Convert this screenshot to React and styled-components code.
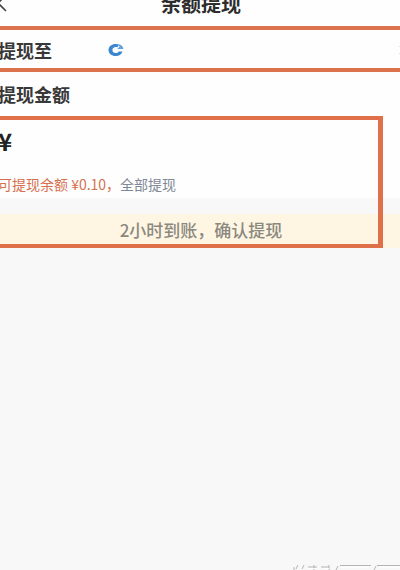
import React from "react";
import styled, { createGlobalStyle } from "styled-components";

const GlobalStyle = createGlobalStyle`
  * {
    box-sizing: border-box;
  }
  body {
    margin: 0;
    background: #f8f8f8;
    font-family: "Noto Sans CJK SC", "Liberation Sans", sans-serif;
    color: #333;
  }
`;

const Page = styled.div`
  display: flex;
  flex-direction: column;
  min-height: 100vh;
  overflow: hidden;
`;

const Header = styled.header`
  display: flex;
  align-items: flex-end;
  height: 26px;
  padding: 0 32px 8px 0;
  background: #fefefe;
`;

const BackButton = styled.button`
  display: flex;
  width: 40px;
  margin: 0 0 6px -6px;
  padding: 0;
  border: 0;
  background: none;
`;

const Title = styled.h1`
  flex: 1;
  margin: 0;
  font-size: 20px;
  line-height: 28px;
  font-weight: 700;
  text-align: center;
  color: #2d2d2d;
`;

const AccountRow = styled.div`
  display: flex;
  align-items: center;
  height: 46px;
  margin-right: -8px;
  padding-top: 2px;
  border: solid #dc734e;
  border-width: 4px 0;
  background: #fefefe;
`;

const Label = styled.div`
  width: 110px;
  margin-left: -2px;
  font-size: 18px;
  line-height: 24px;
  font-weight: 700;
  color: #383838;
`;

const Account = styled.button`
  display: flex;
  flex: 1;
  align-items: center;
  justify-content: space-between;
  padding: 0;
  border: 0;
  background: none;
`;

const AmountHeading = styled.div`
  display: flex;
  align-items: center;
  height: 44px;
  background: #fefefe;
`;

const Form = styled.form`
  position: relative;
`;

const Amount = styled.div`
  padding: 8px 0 2px;
  background: #fefefe;
`;

const Field = styled.label`
  display: flex;
  align-items: center;
  height: 32px;
  margin-left: -2px;
  font-size: 24px;
  font-weight: 700;
  color: #222;
`;

const AmountInput = styled.input`
  flex: 1;
  min-width: 0;
  border: 0;
  outline: 0;
  background: none;
  font: inherit;
`;

const Balance = styled.div`
  display: flex;
  align-items: center;
  height: 24px;
  margin: 16px 0 0 -2px;
  font-size: 14px;
  white-space: pre;
  color: #d5704e;
`;

const AllButton = styled.button`
  padding: 0;
  border: 0;
  background: none;
  font: inherit;
  color: #808895;
`;

const Submit = styled.button`
  display: block;
  width: 100%;
  height: 34px;
  margin-top: 16px;
  padding: 0 0 2px 2px;
  border: 0;
  background: #fef6e2;
  font-family: inherit;
  font-size: 17px;
  line-height: 32px;
  font-weight: 500;
  color: #8b887f;
`;

const Highlight = styled.div`
  position: absolute;
  inset: 0 17px 0 -8px;
  border: 4px solid #e0704a;
  border-right-width: 5px;
  pointer-events: none;
`;

const Footer = styled.footer`
  display: flex;
  justify-content: flex-end;
  margin-top: auto;
`;

function BankLogo() {
  return (
    <svg width="16" height="14" viewBox="0 0 16 14" fill="none">
      <path
        d="M14.500 8.500c-.7 2.700-3.200 4.500-6.700 4.500C3.400 13 .5 10.400.5 7s3-6 7.300-6c1.300 0 2.400.2 3.400.6L9.500 4.200C9 4 8.400 3.900 7.800 3.900 5.700 3.900 4.400 5.200 4.400 7s1.300 3.100 3.400 3.100c1.300 0 2.300-.5 2.900-1.600z"
        fill="#3b87cf"
      />
      <path d="M10.500 1.200c2.700.5 4.500 2.200 5 4.800H9.200l2.300-2.300z" fill="#62a3df" />
    </svg>
  );
}

export default function App() {
  return (
    <Page>
      <GlobalStyle />
      <Header>
        <BackButton aria-label="返回">
          <svg width="14" height="18" viewBox="0 0 14 18" fill="none">
            <path d="M12 1L4 9l8 8" stroke="#444" strokeWidth="1.6" />
          </svg>
        </BackButton>
        <Title>余额提现</Title>
      </Header>
      <AccountRow>
        <Label>提现至</Label>
        <Account aria-label="选择银行卡">
          <BankLogo />
          <svg width="10" height="12" viewBox="0 0 10 12" fill="none">
            <path d="M1 2l4 4-4 4" stroke="#ddd" />
          </svg>
        </Account>
      </AccountRow>
      <AmountHeading>
        <Label>提现金额</Label>
      </AmountHeading>
      <Form onSubmit={(e) => e.preventDefault()}>
        <Amount>
          <Field>
            ¥
            <AmountInput inputMode="decimal" aria-label="提现金额" />
          </Field>
          <Balance>
            可提现余额 ¥0.10，<AllButton type="button">全部提现</AllButton>
          </Balance>
        </Amount>
        <Submit type="submit">2小时到账，确认提现</Submit>
        <Highlight />
      </Form>
      <Footer>
        <svg width="110" height="6" viewBox="0 0 110 6" fill="none">
          <path
            d="M4 3v3M8 1l-2 4M14 1l-2 4M18 3h9M24 1v5M31 3h8M39 1v5M48 2l-2 4M50 1.500h31M87 1.500h23M86 2l-2 4"
            stroke="#b5b5b5"
          />
          <path d="M18 4.500h9M32 4.500h7M51 3h28M89 3h21" stroke="#fff" />
        </svg>
      </Footer>
    </Page>
  );
}
